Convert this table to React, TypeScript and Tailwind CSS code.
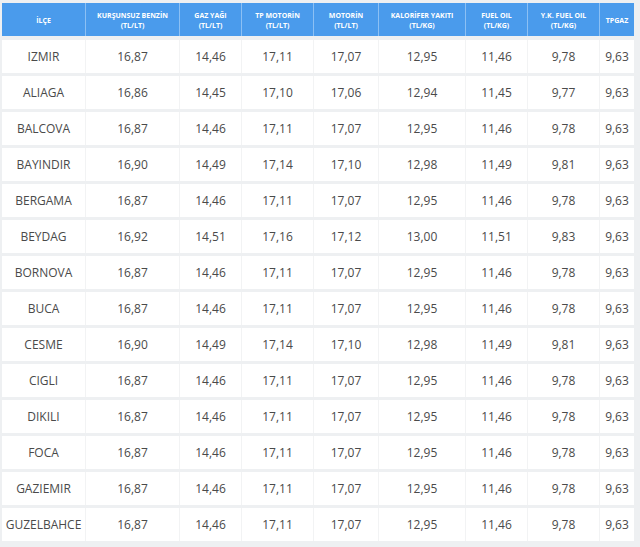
import React from "react";

const columns = [
  { title: "İLÇE", unit: "" },
  { title: "KURŞUNSUZ BENZİN", unit: "(TL/LT)" },
  { title: "GAZ YAĞI", unit: "(TL/LT)" },
  { title: "TP MOTORİN", unit: "(TL/LT)" },
  { title: "MOTORİN", unit: "(TL/LT)" },
  { title: "KALORİFER YAKITI", unit: "(TL/KG)" },
  { title: "FUEL OIL", unit: "(TL/KG)" },
  { title: "Y.K. FUEL OIL", unit: "(TL/KG)" },
  { title: "TPGAZ", unit: "" },
];

const rows: string[][] = [
  ["IZMIR", "16,87", "14,46", "17,11", "17,07", "12,95", "11,46", "9,78", "9,63"],
  ["ALIAGA", "16,86", "14,45", "17,10", "17,06", "12,94", "11,45", "9,77", "9,63"],
  ["BALCOVA", "16,87", "14,46", "17,11", "17,07", "12,95", "11,46", "9,78", "9,63"],
  ["BAYINDIR", "16,90", "14,49", "17,14", "17,10", "12,98", "11,49", "9,81", "9,63"],
  ["BERGAMA", "16,87", "14,46", "17,11", "17,07", "12,95", "11,46", "9,78", "9,63"],
  ["BEYDAG", "16,92", "14,51", "17,16", "17,12", "13,00", "11,51", "9,83", "9,63"],
  ["BORNOVA", "16,87", "14,46", "17,11", "17,07", "12,95", "11,46", "9,78", "9,63"],
  ["BUCA", "16,87", "14,46", "17,11", "17,07", "12,95", "11,46", "9,78", "9,63"],
  ["CESME", "16,90", "14,49", "17,14", "17,10", "12,98", "11,49", "9,81", "9,63"],
  ["CIGLI", "16,87", "14,46", "17,11", "17,07", "12,95", "11,46", "9,78", "9,63"],
  ["DIKILI", "16,87", "14,46", "17,11", "17,07", "12,95", "11,46", "9,78", "9,63"],
  ["FOCA", "16,87", "14,46", "17,11", "17,07", "12,95", "11,46", "9,78", "9,63"],
  ["GAZIEMIR", "16,87", "14,46", "17,11", "17,07", "12,95", "11,46", "9,78", "9,63"],
  ["GUZELBAHCE", "16,87", "14,46", "17,11", "17,07", "12,95", "11,46", "9,78", "9,63"],
];

const grid = "grid grid-cols-[83px_94px_62px_72px_65px_87px_62px_72px_35px]";

export default function App() {
  return (
    <div
      className="w-[640px] h-[547px] overflow-hidden bg-[#eef0f2] pl-[2px] pt-[3px]"
      style={{ fontFamily: "'Open Sans', sans-serif" }}
    >
      <div className="flex flex-col gap-[3px] w-[632px]">
        {/* header */}
        <div className={`${grid} h-[33px] bg-[#4a9bec] mb-[1px]`}>
          {columns.map((c, i) => (
            <div
              key={c.title}
              className={`flex flex-col items-center justify-center pt-[2px] text-white text-[7px] font-bold leading-[10px] ${
                i > 0 ? "border-l border-[#8cc0f4]" : ""
              }`}
            >
              <span>{c.title}</span>
              {c.unit && <span>{c.unit}</span>}
            </div>
          ))}
        </div>
        {rows.map((r) => (
          <div key={r[0]} className={`${grid} h-[33px] bg-white`}>
            {r.map((v, i) => (
              <div
                key={i}
                className={`flex items-center justify-center text-[12px] text-[#4a4a4a] ${
                  i > 0 ? "border-l border-[#f2f3f4]" : ""
                }`}
              >
                {v}
              </div>
            ))}
          </div>
        ))}
      </div>
    </div>
  );
}
